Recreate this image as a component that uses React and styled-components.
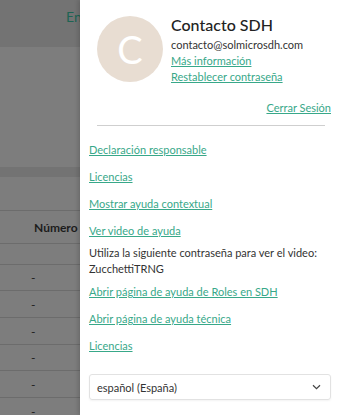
import React from 'react';
import styled, { createGlobalStyle } from 'styled-components';

const GlobalStyle = createGlobalStyle`
  html, body {
    margin: 0;
    padding: 0;
    height: 100%;
    overflow: hidden;
  }
  body {
    font-family: "Lato", "Noto Sans", sans-serif;
  }
`;

const Screen = styled.div`
  display: flex;
  width: 339px;
  height: 415px;
  overflow: hidden;
`;

const Backdrop = styled.div`
  width: 80px;
  flex-shrink: 0;
  display: flex;
  flex-direction: column;
  background-color: #7d7d7d;
  overflow: hidden;
  & > * {
    flex-shrink: 0;
  }
`;

const PageHeader = styled.div`
  height: 47px;
  background-color: #737373;
  padding: 8px 0 0 66px;
  box-sizing: border-box;
  white-space: nowrap;
  overflow: hidden;
  font-size: 14px;
  color: #1d6453;
`;

const Gap = styled.div`
  height: ${p => p.h}px;
  background-color: ${p => p.dark ? '#737373' : 'transparent'};
`;

const Row = styled.div`
  height: ${p => p.h}px;
  border-top: 1px solid #6c6c6c;
  display: flex;
  align-items: center;
  box-sizing: border-box;
  padding-left: ${p => p.pad}px;
  white-space: nowrap;
  overflow: hidden;
  font-size: 12px;
  font-weight: ${p => p.bold ? 700 : 400};
  color: #1c1c1c;
`;

const Panel = styled.div`
  flex: 1;
  background: #fff;
  box-shadow: -2px 0 4px rgba(0, 0, 0, 0.15);
  display: flex;
  flex-direction: column;
  padding: 16px 8px 0 9px;
  color: #333;
  font-size: 11px;
  position: relative;
`;

const Profile = styled.div`
  display: flex;
  gap: 8px;
  padding-left: 8px;
`;

const Avatar = styled.div`
  width: 66px;
  height: 66px;
  border-radius: 50%;
  background: #e8ddd2;
  color: #fff;
  font-size: 38px;
  display: flex;
  align-items: center;
  justify-content: center;
  flex-shrink: 0;
`;

const Info = styled.div`
  display: flex;
  flex-direction: column;
  margin-top: -3px;
`;

const Name = styled.div`
  font-size: 16px;
  font-weight: 500;
  color: #222;
  line-height: 23px;
  margin-bottom: 1px;
`;

const Email = styled.div`
  font-size: 11px;
  line-height: 16px;
`;

const Link = styled.a`
  color: #38a889;
  text-decoration: underline;
  font-size: 11px;
  line-height: 16px;
  cursor: pointer;
  align-self: ${p => p.right ? 'flex-end' : 'flex-start'};
`;

const Logout = styled(Link)`
  margin-top: 15px;
`;

const Divider = styled.hr`
  border: none;
  border-top: 1px solid #cfcfcf;
  margin: 9px 6px 16px 8px;
`;

const Menu = styled.div`
  display: flex;
  flex-direction: column;
  gap: 11px;
`;

const Note = styled.div`
  font-size: 11px;
  line-height: 16px;
  margin: -5px 0 -4px;
`;

const Select = styled.div`
  margin-top: 20px;
  height: 24px;
  border: 1px solid #e2e2e2;
  border-radius: 3px;
  display: flex;
  align-items: center;
  justify-content: space-between;
  padding: 0 9px 0 7px;
  font-size: 11px;
  box-shadow: 0 1px 2px rgba(0, 0, 0, 0.05);
`;

const Chevron = () => (
  <svg width="9" height="6" viewBox="0 0 9 6">
    <path d="M1 1.2 L4.5 4.6 L8 1.2" fill="none" stroke="#444" strokeWidth="1.2" />
  </svg>
);

export default function App() {
  const rows = [26, 27, 27, 26, 27, 27];
  return (
    <Screen>
      <GlobalStyle />
      <Backdrop>
        <PageHeader>Entidades</PageHeader>
        <Gap h={120} />
        <Gap h={10} dark />
        <Gap h={33} />
        <Row h={33} pad={34} bold>Número Documento</Row>
        <Row h={21} pad={32} />
        {rows.map((h, i) => (
          <Row key={i} h={h} pad={31}>-</Row>
        ))}
      </Backdrop>
      <Panel>
        <Profile>
          <Avatar>C</Avatar>
          <Info>
            <Name>Contacto SDH</Name>
            <Email>contacto@solmicrosdh.com</Email>
            <Link>Más información</Link>
            <Link>Restablecer contraseña</Link>
          </Info>
        </Profile>
        <Logout right>Cerrar Sesión</Logout>
        <Divider />
        <Menu>
          <Link>Declaración responsable</Link>
          <Link>Licencias</Link>
          <Link>Mostrar ayuda contextual</Link>
          <Link>Ver video de ayuda</Link>
          <Note>
            Utiliza la siguiente contraseña para ver el video:<br />
            ZucchettiTRNG
          </Note>
          <Link>Abrir página de ayuda de Roles en SDH</Link>
          <Link>Abrir página de ayuda técnica</Link>
          <Link>Licencias</Link>
        </Menu>
        <Select>
          <span>español (España)</span>
          <Chevron />
        </Select>
      </Panel>
    </Screen>
  );
}
